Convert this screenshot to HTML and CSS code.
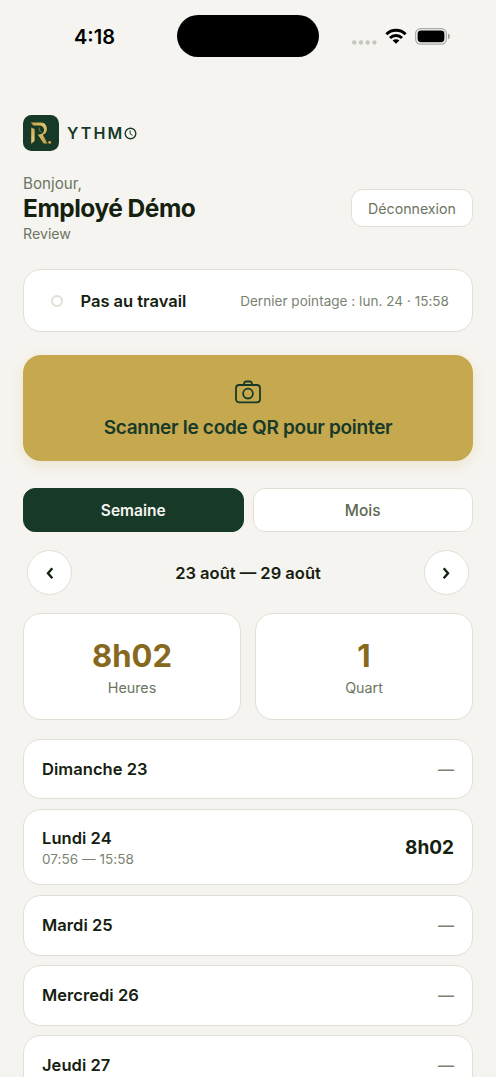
FILE: index.html
```html
<!DOCTYPE html>
<html lang="fr">
<head>
<meta charset="utf-8">
<meta name="viewport" content="width=device-width, initial-scale=1">
<title>Rythmo</title>
<link rel="stylesheet" href="styles.css">
</head>
<body>
<header class="statusbar">
  <span class="clock">4:18</span>
  <span class="island"></span>
  <span class="indicators">
    <svg class="cell" width="25" height="5" viewBox="0 0 25 5" fill="#c6c7c2"><circle cx="2.3" cy="2.5" r="2.2"/><circle cx="9" cy="2.5" r="2.2"/><circle cx="15.7" cy="2.5" r="2.2"/><circle cx="22.4" cy="2.5" r="2.2"/></svg>
    <svg class="wifi" width="22" height="16" viewBox="0 0 22 16" fill="none" stroke="#000" stroke-width="3"><path d="M1.4 6.2a13.7 13.7 0 0 1 19.2 0M5 10a8.6 8.6 0 0 1 12 0"/><path d="M11 15.8 7.6 12.6a4.8 4.8 0 0 1 6.8 0z" fill="#000" stroke="none"/></svg>
    <svg class="battery" width="36" height="17" viewBox="0 0 36 17"><rect x=".6" y=".6" width="30.8" height="15.6" rx="5" fill="none" stroke="#a9aba5" stroke-width="1.2"/><rect x="2.6" y="2.6" width="26.8" height="11.6" rx="3.4"/><path d="M33 5.6c2.6.8 2.6 4.8 0 5.6z" fill="#a0a29c"/></svg>
  </span>
</header>
<main class="page">
  <div class="brand">
    <svg class="brand-mark" width="36" height="36" viewBox="0 0 36 36">
      <defs><linearGradient id="gold" x1="0" y1="0" x2="1" y2="1"><stop offset="0" stop-color="#c39a3d"/><stop offset=".45" stop-color="#e3c36f"/><stop offset="1" stop-color="#c2993c"/></linearGradient></defs>
      <rect width="36" height="36" rx="8.5" fill="#173a28"/>
      <path d="M7.7 7.6H17.5a6.3 6.3 0 0 1 2.3 12.2L24.4 28.5H20.6L14.8 19.4H16.6a4.4 4.4 0 0 0 0-8.9H10.3zM8.2 12.4 11.6 14V26L8.2 28.7z" fill="url(#gold)"/>
      <path d="M16.2 12.5V15.5L18.7 17.2" fill="none" stroke="#8b8048" stroke-width=".8"/>
      <circle cx="26.7" cy="27.4" r="1.4" fill="#d5ae50"/>
    </svg>
    <span class="wordmark">YTHM</span>
    <svg class="brand-o" width="13" height="13" viewBox="0 0 13 13" fill="none" stroke="#173a28"><circle cx="6.5" cy="6.5" r="5.3" stroke-width="1.4"/><path d="M6.1 3.4V6.8L8.6 8.3" stroke-width="1"/></svg>
  </div>

  <section class="greeting">
    <div class="who">
      <span class="hello">Bonjour,</span>
      <h1 class="name">Employé Démo</h1>
      <span class="org">Review</span>
    </div>
    <button class="logout">Déconnexion</button>
  </section>

  <section class="card presence">
    <span class="dot"></span>
    <strong class="state">Pas au travail</strong>
    <span class="last">Dernier pointage : lun. 24 · 15:58</span>
  </section>

  <button class="scan">
    <svg width="26" height="24" viewBox="0 0 26 24" fill="none" stroke="#173a28" stroke-width="1.8" stroke-linejoin="round"><rect x="1" y="5" width="24" height="17.4" rx="3.2"/><path d="M8.6 4.8 9.4 2.6Q9.8 1.5 10.8 1.5h4.4Q16.2 1.5 16.6 2.6l.8 2.2"/><circle cx="13" cy="13.6" r="4.9"/></svg>
    <span class="scan-label">Scanner le code QR pour pointer</span>
  </button>

  <div class="tabs">
    <button class="tab active">Semaine</button>
    <button class="tab">Mois</button>
  </div>

  <nav class="period">
    <button class="step" aria-label="Précédent"><svg width="10" height="12" viewBox="0 0 10 12"><path d="M7.3 1.2 3 6.2l4.3 5"/></svg></button>
    <span class="range">23 août — 29 août</span>
    <button class="step" aria-label="Suivant"><svg width="10" height="12" viewBox="0 0 10 12"><path d="M2.7 1.2 7 6.2l-4.3 5"/></svg></button>
  </nav>

  <section class="stats">
    <div class="card stat"><span class="value">8h02</span><span class="caption">Heures</span></div>
    <div class="card stat"><span class="value">1</span><span class="caption">Quart</span></div>
  </section>

  <section class="days">
    <div class="card day"><span class="day-name">Dimanche 23</span><span class="none">—</span></div>
    <div class="card day worked"><div class="shift"><span class="day-name">Lundi 24</span><span class="hours">07:56 — 15:58</span></div><span class="total">8h02</span></div>
    <div class="card day"><span class="day-name">Mardi 25</span><span class="none">—</span></div>
    <div class="card day"><span class="day-name">Mercredi 26</span><span class="none">—</span></div>
    <div class="card day"><span class="day-name">Jeudi 27</span><span class="none">—</span></div>
  </section>
</main>
</body>
</html>
```
FILE: styles.css
```css
* { box-sizing: border-box; }
html, body { height: 1077px; overflow: hidden; }
body {
  margin: 0;
  background: #f6f4f0;
  color: #15210f;
  font-family: Inter, "Liberation Sans", sans-serif;
  font-size: 16px;
}
button { font: inherit; padding: 0; margin: 0; }
svg { display: block; flex: none; }
.card {
  background: #fff;
  border: 1px solid #e2dfd4;
  border-radius: 18px;
}

/* Status bar */
.statusbar {
  display: grid;
  grid-template-columns: 177px 142px 1fr;
  height: 115px;
  padding-top: 15px;
  align-items: start;
}
.clock {
  padding-left: 74px;
  line-height: 44px;
  font-size: 20px;
  font-weight: 600;
  color: #000;
}
.island { height: 42px; border-radius: 21px; background: #000; }
.indicators { display: flex; height: 42px; padding-left: 33px; align-items: center; }
.cell { margin-top: 12px; }
.wifi { margin-left: 8px; }
.battery { margin-left: 8px; }

.page { display: flex; flex-direction: column; padding: 0 23px; }

/* Brand */
.brand { display: flex; align-items: center; height: 36px; }
.wordmark {
  margin-left: 8px;
  font-size: 16px;
  font-weight: 600;
  letter-spacing: 2.1px;
  color: #173a28;
}

/* Greeting */
.greeting { display: flex; justify-content: space-between; align-items: center; margin-top: 22px; height: 70px; }
.who { display: flex; flex-direction: column; padding-top: 2px; }
.hello { font-size: 15.2px; line-height: 20px; color: #6b7562; }
.name { margin: 0; font-size: 24.5px; line-height: 29px; font-weight: 700; letter-spacing: -.5px; }
.org { font-size: 14.2px; line-height: 22px; color: #6b7562; }
.logout {
  width: 122px;
  height: 38px;
  background: #fff;
  border: 1px solid #e2dfd4;
  border-radius: 12px;
  color: #6b7562;
  font-size: 14.2px;
}

/* Presence */
.presence { display: flex; align-items: center; height: 63px; margin-top: 26px; padding: 0 23px 0 26.5px; }
.dot { width: 12px; height: 12px; border: 2px solid #e2dfd4; border-radius: 50%; }
.state { margin-left: 18px; font-size: 16.5px; font-weight: 600; letter-spacing: -.02px; }
.last { margin-left: auto; font-size: 13.5px; letter-spacing: .04px; color: #7a8372; }

/* Scan button */
.scan {
  display: flex;
  flex-direction: column;
  align-items: center;
  height: 106px;
  margin-top: 23px;
  padding-top: 25px;
  border: 0;
  border-radius: 18px;
  background: #c6a84f;
  box-shadow: 0 4px 14px rgba(198, 168, 79, .2);
  color: #173a28;
}
.scan-label { margin-top: 12px; font-size: 19px; line-height: 24px; font-weight: 600; letter-spacing: -.28px; }

/* Tabs */
.tabs { display: grid; grid-template-columns: 1fr 1fr; gap: 9px; margin-top: 27px; }
.tab {
  height: 44px;
  background: #fff;
  border: 1px solid #e2dfd4;
  border-radius: 12px;
  color: #5c6950;
  font-size: 15.5px;
  font-weight: 500;
}
.tab.active { background: #173a28; border-color: #173a28; color: #f6f4f0; font-weight: 600; }

/* Period */
.period { display: flex; align-items: center; justify-content: space-between; height: 45px; margin-top: 18px; padding: 0 4px; }
.step {
  display: grid;
  place-items: center;
  width: 45px;
  height: 45px;
  background: #fff;
  border: 1px solid #e2dfd4;
  border-radius: 50%;
}
.step path { fill: none; stroke: #15210f; stroke-width: 2.4; }
.range { font-size: 16.5px; font-weight: 600; }

/* Stats */
.stats { display: grid; grid-template-columns: 1fr 1fr; gap: 14px; margin-top: 18.4px; }
.stat { display: flex; flex-direction: column; align-items: center; height: 107px; padding-top: 21.5px; }
.value { font-size: 31px; line-height: 40px; font-weight: 700; color: #866820; }
.caption { margin-top: 2.5px; font-size: 14.3px; line-height: 20px; color: #6b7562; }

/* Days */
.days { display: flex; flex-direction: column; gap: 9.5px; margin-top: 18.5px; }
.day { display: flex; align-items: center; justify-content: space-between; height: 60.6px; flex: none; padding: 0 18px; }
.day.worked { height: 76.5px; }
.day-name { font-size: 16.5px; line-height: 22px; font-weight: 600; letter-spacing: .05px; }
.shift { display: flex; flex-direction: column; padding-top: 2px; }
.hours { font-size: 13.5px; line-height: 20px; letter-spacing: .05px; color: #7a8372; }
.total { font-size: 19px; font-weight: 700; }
.none { font-size: 16px; font-weight: 500; color: #7a8372; }
```
